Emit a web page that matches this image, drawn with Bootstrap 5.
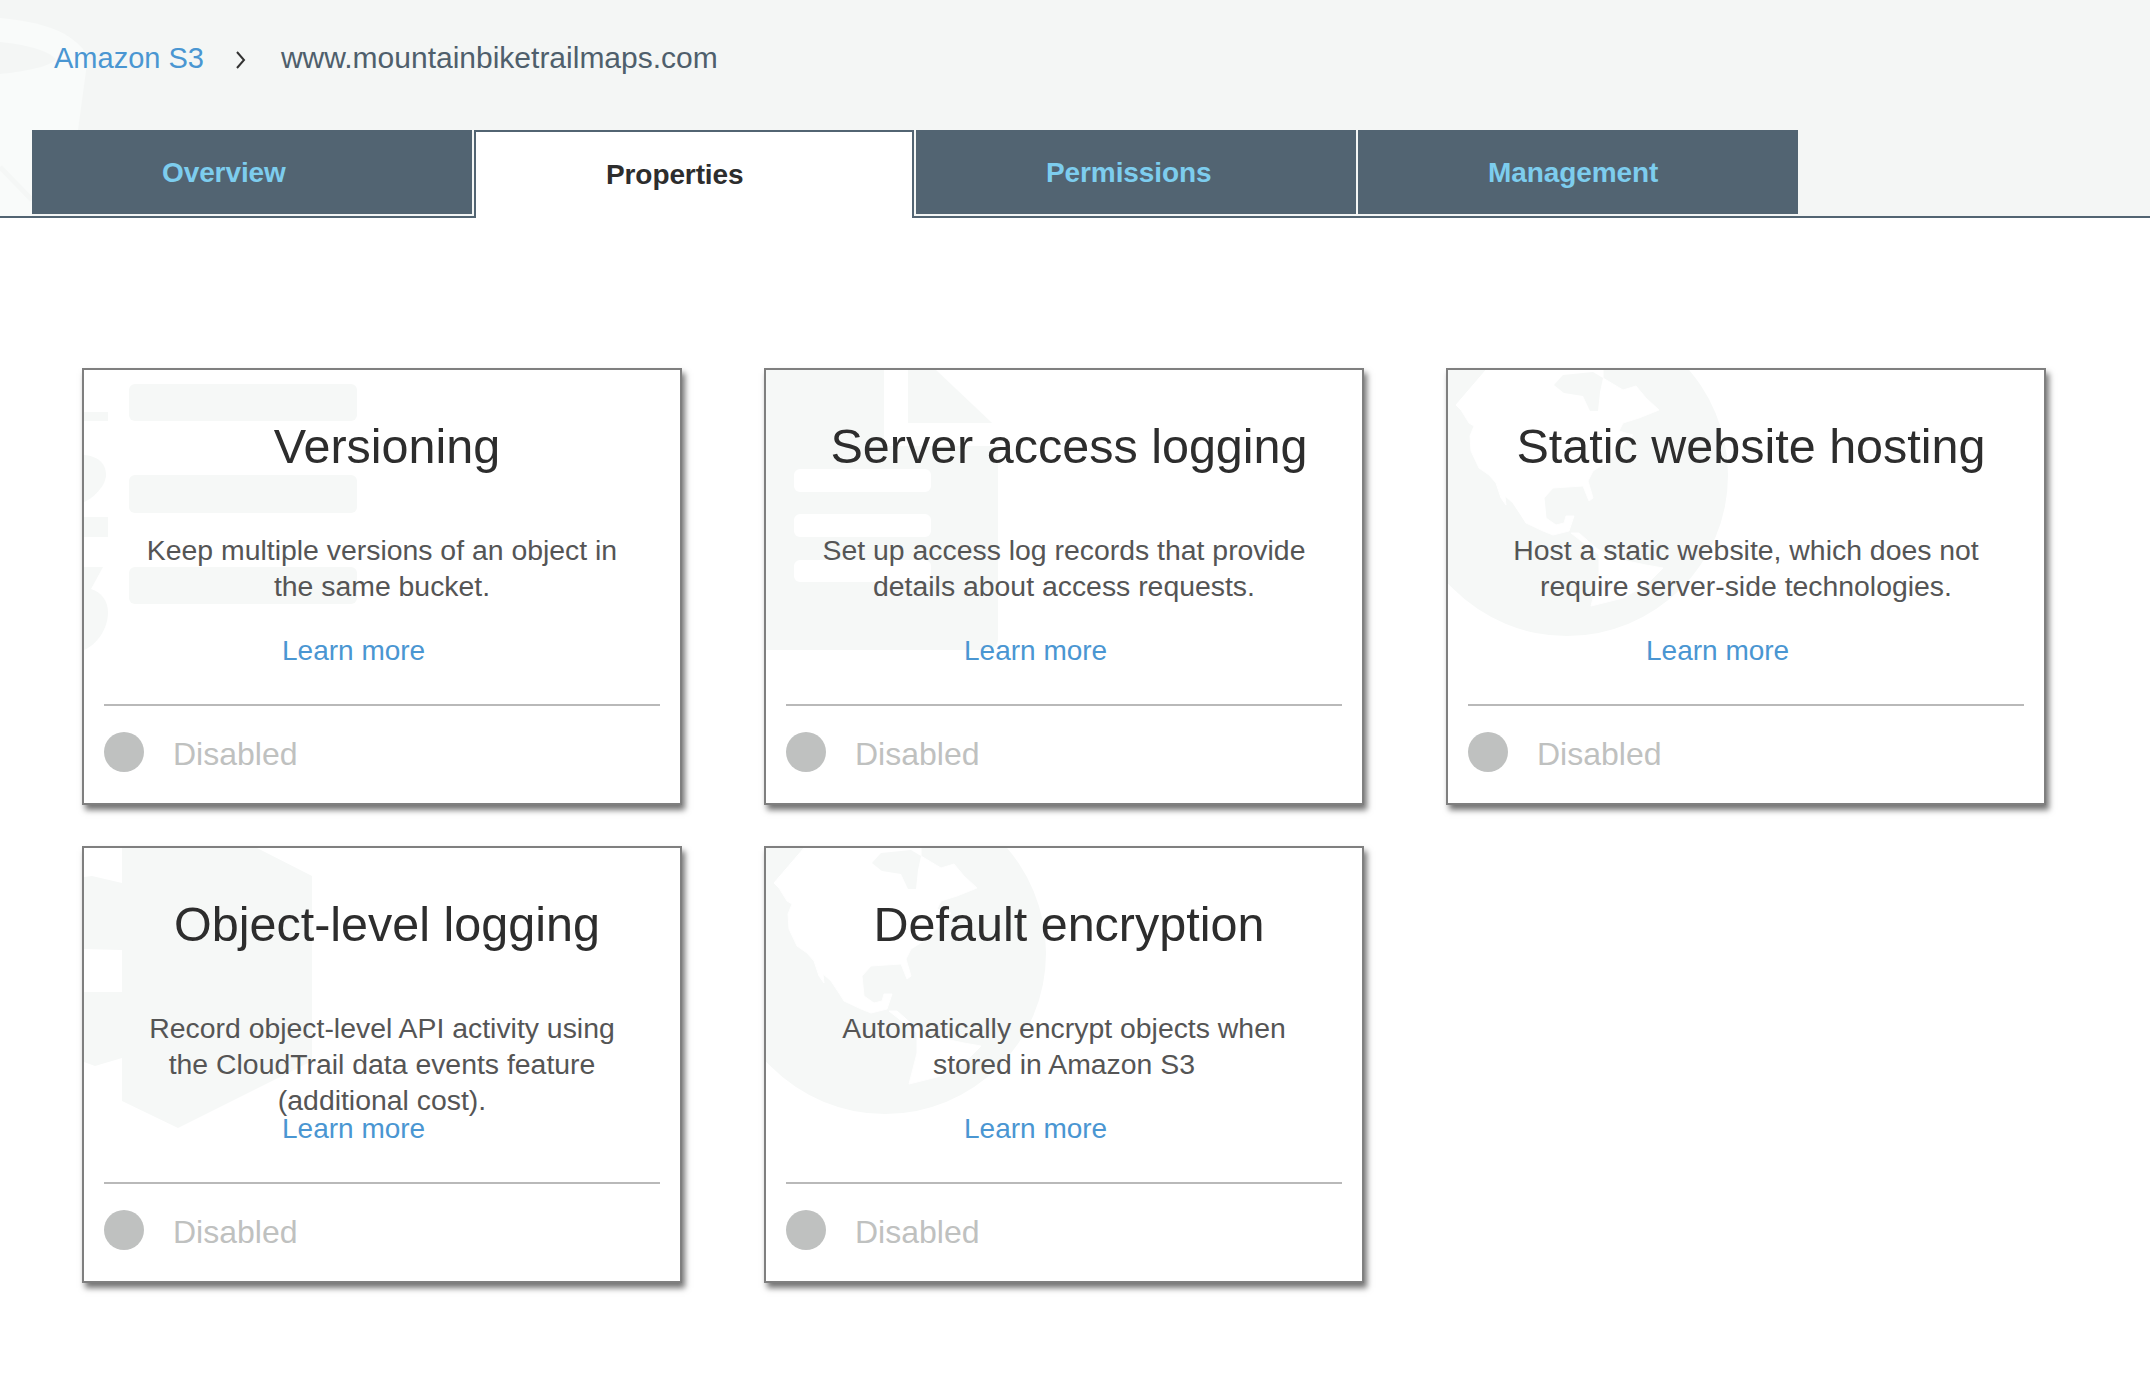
<!DOCTYPE html>
<html lang="en">
<head>
  <meta charset="UTF-8">
  <title>www.mountainbiketrailmaps.com - Properties</title>
  <link href="https://cdn.jsdelivr.net/npm/bootstrap@5.3.3/dist/css/bootstrap.min.css" rel="stylesheet">
  <style>
    body { font-family: "Liberation Sans", Arial, sans-serif; background: #fff; }

    /* header */
    .s3-header { position: relative; height: 218px; background: #f4f6f5; border-bottom: 2px solid #526472; overflow: visible; }
    .s3-header-art { position: absolute; left: 0; top: 0; width: 220px; height: 216px; }
    .s3-crumbs { position: relative; height: 130px; padding: 41px 0 0 54px; font-size: 29px; line-height: 34px; }
    .s3-crumbs a { color: #4a96d2; text-decoration: none; }
    .s3-crumbs .s3-bucket { color: #4f5f6c; font-size: 30px; }
    .s3-crumbs svg { margin: 0 34px 0 31px; }

    /* tabs */
    .s3-tabs { position: relative; padding-left: 32px; gap: 2px; }
    .s3-tab { display: block; width: 440px; height: 84px; padding: 29px 0 0 130px; background: #526472; color: #7dcdee; font-size: 28px; line-height: 28px; font-weight: 700; letter-spacing: -.1px; text-decoration: none; }
    .s3-tab-on { height: 88px; margin-bottom: -2px; padding-top: 29px; padding-left: 130px; background: #fff; color: #2d2d2d; border: 2px solid #526472; border-bottom: 0; z-index: 1; }

    /* feature cards */
    .s3-grid { display: grid; grid-template-columns: repeat(3, 600px); column-gap: 82px; row-gap: 41px; padding: 150px 0 60px 82px; }
    .s3-card { position: relative; height: 437px; background: #fff; border: 2px solid #7f7f7f; box-shadow: 3px 5px 6px rgba(0, 0, 0, .55); overflow: hidden; }
    .s3-art { position: absolute; left: 0; top: 0; width: 596px; height: 433px; }
    .s3-inner { position: relative; height: 100%; padding: 0 20px; }
    .s3-title { height: 162px; margin: 0; padding: 48px 0 0 10px; text-align: center; font-size: 48.5px; line-height: 56px; font-weight: 400; color: #2d2d2d; }
    .s3-desc { height: 72px; margin: 0; padding: 0 36px; text-align: center; font-size: 28.4px; line-height: 36px; color: #555; }
    .s3-more-wrap { height: 100px; padding: 30px 0 0 178px; font-size: 28px; line-height: 34px; }
    .s3-more-wrap a { color: #4a96d2; text-decoration: none; }
    .s3-rule { margin: 0; height: 2px; background: #b9b9b9; border: 0; opacity: 1; }
    .s3-state { padding-top: 26px; gap: 29px; font-size: 32px; line-height: 40px; color: #bfc1c0; }
    .s3-dot { display: block; width: 40px; height: 40px; border-radius: 50%; background: #bfc1c0; }
    .s3-state-text { padding-top: 2px; }
  </style>
</head>
<body>
  <!-- header with breadcrumb and tabs -->
  <div class="s3-header">
    <svg class="s3-header-art" viewBox="0 0 220 216">
      <path d="M0 18 C40 22 72 30 88 56 L78 130 L0 130 Z" fill="#f9fbfa"/>
      <path d="M0 42 C22 44 50 50 56 60 C46 68 20 72 0 74 Z" fill="#f4f6f5"/>
      <rect x="0" y="130" width="32" height="86" fill="#f9fbfa"/>
      <path d="M0 167 L32 200" stroke="#f5f7f6" stroke-width="5"/>
    </svg>
    <div class="s3-crumbs">
      <a href="#">Amazon S3</a><svg width="12" height="20" viewBox="0 0 12 20"><path d="M2 2 L9 10 L2 18" fill="none" stroke="#333" stroke-width="2"/></svg><span class="s3-bucket">www.mountainbiketrailmaps.com</span>
    </div>
    <div class="s3-tabs d-flex">
      <a class="s3-tab" href="#">Overview</a>
      <a class="s3-tab s3-tab-on" href="#">Properties</a>
      <a class="s3-tab" href="#">Permissions</a>
      <a class="s3-tab" href="#">Management</a>
    </div>
  </div>

  <div class="s3-grid" id="cards"></div>

  <script>
    // background drawings, coordinates are from the card's padding box
    const art = {
      bars: `
        <rect x="45" y="14" width="228" height="37" rx="6"/>
        <rect x="45" y="105" width="228" height="38" rx="6"/>
        <rect x="45" y="197" width="228" height="37" rx="6"/>
        <rect x="0" y="42" width="24" height="9"/>
        <path d="M0 85 C12 86 22 92 22 105 C22 115 10 128 0 132 Z"/>
        <rect x="0" y="147" width="24" height="20"/>
        <path d="M0 197 H19 L7 219 C18 222 24 232 24 242 C24 262 10 276 0 280 Z"/>`,
      doc: `
        <path d="M0 0 H118 V76 H232 V268 Q232 280 218 280 H0 Z"/>
        <path d="M142 0 H170 L226 53 H142 Z"/>
        <g fill="#fff">
          <rect x="28" y="99" width="137" height="23" rx="6"/>
          <rect x="28" y="144" width="137" height="23" rx="6"/>
          <rect x="28" y="190" width="137" height="22" rx="6"/>
        </g>`,
      globe: `
        <circle cx="119" cy="105" r="161"/>
        <path fill="#fff" stroke="#fff" stroke-width="1" stroke-linejoin="round" d="M38 0 L8 35 L13 40 L21 53 L26 56 L22 66 L23 81 L31 98 L41 105 L48 113 L53 128 L58 135 L57 126 L65 133 L73 145 L78 153 L95 161 L105 165 L121 161 L126 146 L118 146 L116 153 L108 155 L98 148 L96 128 L105 118 L135 116 L141 131 L145 128 L140 111 L145 101 L161 91 L185 65 L171 61 L175 53 L191 48 L211 40 L198 28 L188 16 L175 20 L155 8 L155 0 Z"/>
        <path d="M106 15 L115 5 L145 2 L155 8 L152 22 L150 41 L142 41 L135 26 L116 23 Z"/>
        <path fill="#fff" stroke="#fff" stroke-width="1" stroke-linejoin="round" d="M123 163 L131 163 L148 178 L165 188 L198 195 L215 198 L198 215 L175 228 L143 236 L151 205 L151 185 Z"/>`,
      hex: `
        <path d="M38 0 H173 L228 28 V213 L94 280 L38 253 V210 L11 218 L0 214 V144 H38 V0 Z"/>
        <path d="M0 29 L8 28 L38 35 V102 L0 101 Z"/>
        <path fill="#fff" d="M0 102 H38 V144 H0 Z"/>`
    };

    const cards = [
      { title: 'Versioning', desc: 'Keep multiple versions of an object in the same bucket.', art: 'bars' },
      { title: 'Server access logging', desc: 'Set up access log records that provide details about access requests.', art: 'doc' },
      { title: 'Static website hosting', desc: 'Host a static website, which does not require server-side technologies.', art: 'globe' },
      { title: 'Object-level logging', desc: 'Record object-level API activity using the CloudTrail data events feature (additional cost).', art: 'hex' },
      { title: 'Default encryption', desc: 'Automatically encrypt objects when stored in Amazon S3', art: 'globe' }
    ];

    document.getElementById('cards').innerHTML = cards.map(c => `
      <div class="s3-card">
        <svg class="s3-art" viewBox="0 0 596 433" fill="#f6f8f7">${art[c.art]}</svg>
        <div class="s3-inner">
          <h2 class="s3-title">${c.title}</h2>
          <p class="s3-desc">${c.desc}</p>
          <div class="s3-more-wrap"><a href="#">Learn more</a></div>
          <hr class="s3-rule">
          <div class="s3-state d-flex">
            <span class="s3-dot"></span>
            <span class="s3-state-text">Disabled</span>
          </div>
        </div>
      </div>`).join('');
  </script>
  <script src="https://cdn.jsdelivr.net/npm/bootstrap@5.3.3/dist/js/bootstrap.bundle.min.js"></script>
</body>
</html>
